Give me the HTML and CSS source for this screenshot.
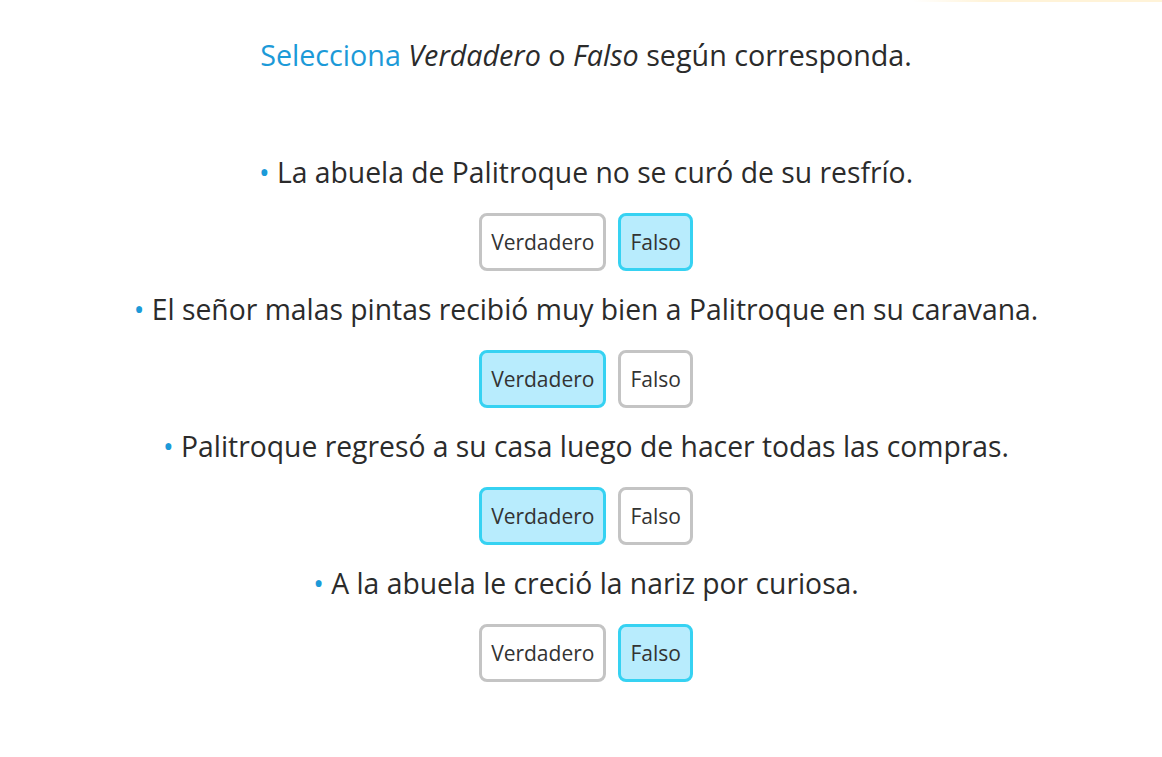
FILE: index.html
```html
<!DOCTYPE html>
<html lang="es">
<head>
<meta charset="utf-8">
<link rel="stylesheet" href="styles.css">
</head>
<body>
<div class="topline"></div>
<main class="quiz">
  <p class="title"><span class="accent">Selecciona</span> <em>Verdadero</em> o <em>Falso</em> según corresponda.</p>
  <div class="items">
    <section class="item">
      <p class="statement"><span class="dot">•</span> La abuela de Palitroque no se curó de su resfrío.</p>
      <div class="choices">
        <button class="choice">Verdadero</button>
        <button class="choice selected">Falso</button>
      </div>
    </section>
    <section class="item">
      <p class="statement"><span class="dot">•</span> El señor malas pintas recibió muy bien a Palitroque en su caravana.</p>
      <div class="choices">
        <button class="choice selected">Verdadero</button>
        <button class="choice">Falso</button>
      </div>
    </section>
    <section class="item">
      <p class="statement"><span class="dot">•</span> Palitroque regresó a su casa luego de hacer todas las compras.</p>
      <div class="choices">
        <button class="choice selected">Verdadero</button>
        <button class="choice">Falso</button>
      </div>
    </section>
    <section class="item">
      <p class="statement"><span class="dot">•</span> A la abuela le creció la nariz por curiosa.</p>
      <div class="choices">
        <button class="choice">Verdadero</button>
        <button class="choice selected">Falso</button>
      </div>
    </section>
  </div>
</main>
</body>
</html>
```
FILE: styles.css
```css
html, body {
  margin: 0;
  padding: 0;
  background: #ffffff;
}
body {
  font-family: "Open Sans", "Noto Sans", sans-serif;
  color: #2b2b2b;
  position: relative;
  width: 1162px;
  height: 757px;
  overflow: hidden;
}
.topline {
  position: absolute;
  top: 0;
  right: 0;
  width: 250px;
  height: 2px;
  background: linear-gradient(to right, rgba(255,240,205,0), #fff3d8 30%, #fff3d8);
}
.quiz {
  display: flex;
  flex-direction: column;
  align-items: center;
  padding-top: 37px;
  padding-left: 10px;
}
.title {
  margin: 0;
  font-size: 28.7px;
  line-height: 36px;
  text-align: center;
  white-space: nowrap;
}
.accent {
  color: #1c9ad8;
}
.items {
  margin-top: 81px;
  display: flex;
  flex-direction: column;
  align-items: center;
}
.item {
  display: flex;
  flex-direction: column;
  align-items: center;
  height: 137px;
}
.statement {
  margin: 0;
  font-size: 28.3px;
  line-height: 36px;
  text-align: center;
  white-space: nowrap;
}
.dot {
  color: #1c9ad8;
}
.choices {
  margin-top: 23px;
  display: flex;
  gap: 12px;
}
.choice {
  font-family: inherit;
  font-size: 21px;
  color: #333333;
  background: #ffffff;
  border: 3px solid #c4c4c4;
  border-radius: 8px;
  height: 58px;
  padding: 0 9px;
  box-sizing: border-box;
}
.choice.selected {
  background: #b8ecfd;
  border-color: #36d2f2;
}
```
